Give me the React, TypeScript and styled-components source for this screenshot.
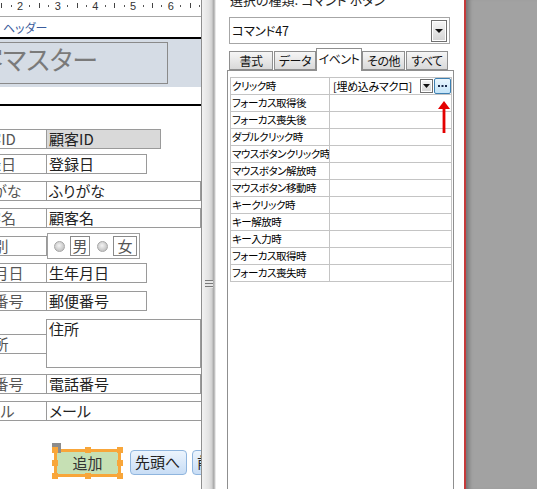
import React from "react";
import styled, { createGlobalStyle } from "styled-components";

const GlobalStyle = createGlobalStyle`
  html, body { margin: 0; padding: 0; }
  body { background: #a2a2a2; }
  #root { width: 537px; height: 489px; overflow: hidden; }
  * { box-sizing: border-box; }
`;

const Window = styled.div`
  display: flex;
  width: 537px;
  height: 489px;
  overflow: hidden;
  font-family: "Noto Sans CJK JP", "Noto Sans", "Liberation Sans", sans-serif;
  font-feature-settings: "palt";
`;

/* ---------- design surface ---------- */
const DesignPane = styled.div`
  width: 202px;
  flex-shrink: 0;
  background: #fff;
  border-right: 1px solid #8e8e8e;
  overflow: hidden;
  display: flex;
  flex-direction: column;
`;

const Ruler = styled.div`
  height: 17px;
  flex-shrink: 0;
  border-bottom: 1px solid #a8a8a8;
  background: #fff;
  svg { display: block; }
`;

const SectionBar = styled.div<{ $h: number }>`
  height: ${(p) => p.$h}px;
  flex-shrink: 0;
  border-bottom: 2px solid #000;
  background: #fff;
  padding-left: 3px;
  display: flex;
  align-items: center;
  font-size: 12px;
  color: #3a5c9c;
`;

const HeaderSection = styled.div`
  height: 48px;
  flex-shrink: 0;
  background: #d5dce5;
  padding-top: 3px;
`;

const TitleBox = styled.div`
  margin-left: -52px;
  width: 220px;
  height: 42px;
  border: 1px solid #8a8a8a;
  padding-left: 2px;
  font-size: 26px;
  line-height: 32px;
  color: #7a7a7a;
  white-space: nowrap;
`;

const Detail = styled.div`
  margin-left: -60px;
  display: flex;
  flex-direction: column;
`;

const Row = styled.div<{ $mt: number }>`
  display: flex;
  align-items: center;
  margin-top: ${(p) => p.$mt}px;
`;

const Label = styled.div`
  width: 107px;
  height: 20px;
  flex-shrink: 0;
  border: 1px solid #9a9a9a;
  text-align: center;
  font-size: 15px;
  line-height: 17px;
  color: #555;
  white-space: nowrap;
`;

const Field = styled.div<{ $w: number; $h?: number; $gray?: boolean }>`
  width: ${(p) => p.$w}px;
  height: ${(p) => p.$h ?? 20}px;
  flex-shrink: 0;
  margin-left: -1px;
  border: 1px solid #9a9a9a;
  background: ${(p) => (p.$gray ? "#d9d9d9" : "#fff")};
  padding-left: 2px;
  font-size: 15px;
  line-height: 17px;
  color: #222;
  white-space: nowrap;
`;

const OptionGroup = styled.div`
  width: 93px;
  height: 26px;
  flex-shrink: 0;
  border: 1px solid #a0a0a0;
  display: flex;
  align-items: center;
  padding-left: 5px;
`;

const Radio = styled.span<{ $ml: number }>`
  width: 11px;
  height: 11px;
  margin-left: ${(p) => p.$ml}px;
  border-radius: 50%;
  border: 1px solid #a6a6a6;
  background: radial-gradient(circle at 45% 40%, #f4f4f4 0, #cfcfcf 55%, #b4b4b4 100%);
  flex-shrink: 0;
`;

const OptBox = styled.span<{ $w: number }>`
  width: ${(p) => p.$w}px;
  height: 20px;
  margin-left: 5px;
  border: 1px solid #8a8a8a;
  font-size: 15px;
  line-height: 17px;
  color: #555;
  text-align: center;
  flex-shrink: 0;
`;

const ButtonRow = styled.div`
  display: flex;
  align-items: flex-start;
  margin-top: 28px;
  padding-left: 114px;
`;

const SelectedButton = styled.div`
  position: relative;
  width: 67px;
  height: 28px;
  flex-shrink: 0;
  border: 3px solid #f8a63a;
  background: #c6e0b4;
  font-size: 15px;
  line-height: 21px;
  color: #333;
  text-align: center;
`;

const Handle = styled.span<{ $x: string; $y: string }>`
  position: absolute;
  width: 6px;
  height: 6px;
  background: #f8a63a;
  left: ${(p) => p.$x};
  top: ${(p) => p.$y};
`;

const MoveHandle = styled.span`
  position: absolute;
  left: -5px;
  top: -9px;
  width: 9px;
  height: 10px;
  background: #8c8c8c;
`;

const NavButton = styled.div<{ $ml: number; $w: number }>`
  margin-left: ${(p) => p.$ml}px;
  margin-top: 1px;
  width: ${(p) => p.$w}px;
  height: 25px;
  flex-shrink: 0;
  border: 1px solid #8fb5de;
  border-radius: 4px;
  background: linear-gradient(#ecf4fd, #c8ddf5);
  font-size: 15px;
  line-height: 22px;
  color: #222;
  padding-left: 4px;
  white-space: nowrap;
`;

/* ---------- splitter ---------- */
const Splitter = styled.div`
  width: 14px;
  flex-shrink: 0;
  background: linear-gradient(
    to right,
    #f2f2f2 0,
    #e2e2e2 7px,
    #d0d0d0 10px,
    #b4b4b4 11px,
    #a6a6a6 12px,
    #dcdcdc 13px,
    #f4f4f4 14px
  );
  padding-top: 280px;
  padding-left: 3px;
`;

const Grip = styled.div`
  width: 8px;
  height: 8px;
  background: repeating-linear-gradient(#7a7a7a 0 1px, #e6e6e6 1px 3px);
`;

/* ---------- property sheet ---------- */
const PropertyPane = styled.div`
  width: 250px;
  flex-shrink: 0;
  background: #fff;
  border-right: 2px solid #c43a3a;
  padding-left: 11px;
  padding-right: 10px;
  display: flex;
  flex-direction: column;
  overflow: hidden;
`;

const SelectionType = styled.div`
  margin-top: -8px;
  height: 15px;
  padding-left: 3px;
  font-size: 13px;
  line-height: 15px;
  color: #222;
  white-space: nowrap;
`;

const Combo = styled.div`
  margin-top: 10px;
  margin-left: 2px;
  width: 221px;
  height: 27px;
  border: 1px solid #a6a6a6;
  display: flex;
  align-items: center;
  padding: 0 2px 0 2px;
`;

const ComboText = styled.span`
  flex: 1;
  font-size: 12.5px;
  letter-spacing: -0.2px;
  color: #111;
`;

const DropButton = styled.span<{ $w: number; $h: number }>`
  width: ${(p) => p.$w}px;
  height: ${(p) => p.$h}px;
  flex-shrink: 0;
  border: 1px solid #707070;
  box-shadow: inset 0 0 0 1px #fff;
  background: linear-gradient(#f6f6f6, #d4d4d4);
  display: flex;
  align-items: center;
  justify-content: center;
`;

const Tabs = styled.div`
  margin-top: 4px;
  height: 22px;
  flex-shrink: 0;
  display: flex;
  align-items: flex-end;
  padding-left: 2px;
`;

const Tab = styled.div<{ $w: number; $ml: number; $active?: boolean }>`
  position: relative;
  z-index: ${(p) => (p.$active ? 1 : 0)};
  width: ${(p) => p.$w}px;
  margin-left: ${(p) => p.$ml}px;
  height: ${(p) => (p.$active ? 23 : 19)}px;
  margin-bottom: ${(p) => (p.$active ? -1 : 0)}px;
  border: 1px solid #8f8f8f;
  border-bottom: ${(p) => (p.$active ? "none" : "1px solid #8f8f8f")};
  background: ${(p) => (p.$active ? "#fff" : "linear-gradient(#f6f6f6, #d9d9d9)")};
  font-size: 12px;
  letter-spacing: -0.5px;
  line-height: ${(p) => (p.$active ? 20 : 17)}px;
  text-align: center;
  color: #111;
  white-space: nowrap;
`;

const Frame = styled.div`
  position: relative;
  flex: 1;
  border: 1px solid #8f8f8f;
  border-bottom: none;
  padding: 6px 1px 0 2px;
`;

const Grid = styled.div`
  display: grid;
  grid-template-columns: 99px 122px;
  border-top: 1px solid #c4c4c4;
  border-left: 1px solid #c4c4c4;
`;

const Cell = styled.div`
  height: 17px;
  border-right: 1px solid #c4c4c4;
  border-bottom: 1px solid #c4c4c4;
  padding-left: 1px;
  font-size: 10.5px;
  letter-spacing: -0.5px;
  line-height: 16px;
  color: #000;
  white-space: nowrap;
  overflow: hidden;
`;

const ValueCell = styled(Cell)`
  display: flex;
  align-items: center;
  padding-left: 3px;
  font-size: 11px;
  letter-spacing: -0.3px;
`;

const MacroText = styled.span`
  flex: 1;
`;

const BuildButton = styled.span`
  width: 17px;
  height: 16px;
  margin-left: 1px;
  flex-shrink: 0;
  border: 1px solid #3c7fb1;
  border-radius: 2px;
  background: linear-gradient(#eaf6fd, #c4e4f8);
  display: flex;
  align-items: center;
  justify-content: center;
`;

const Arrow = styled.svg`
  position: absolute;
  left: 210px;
  top: 30px;
`;

const Backdrop = styled.div`
  flex: 1;
  background: #a2a2a2;
  box-shadow: inset 6px 0 4px -3px rgba(0, 0, 0, 0.28);
`;

/* ---------- data ---------- */
const rows: { label: string; field: string; w: number; mt: number; h?: number; gray?: boolean }[] = [
  { label: "顧客ID", field: "顧客ID", w: 115, mt: 23, gray: true },
  { label: "登録日", field: "登録日", w: 101, mt: 5 },
  { label: "ふりがな", field: "ふりがな", w: 155, mt: 7 },
  { label: "顧客名", field: "顧客名", w: 155, mt: 7 },
];
const rows2: { label: string; field: string; w: number; mt: number; h?: number }[] = [
  { label: "生年月日", field: "生年月日", w: 101, mt: 4 },
  { label: "郵便番号", field: "郵便番号", w: 101, mt: 8 },
  { label: "住所", field: "住所", w: 155, mt: 8, h: 49 },
  { label: "電話番号", field: "電話番号", w: 155, mt: 6 },
  { label: "メール", field: "メール", w: 175, mt: 7 },
];

const events = [
  "フォーカス取得後",
  "フォーカス喪失後",
  "ダブルクリック時",
  "マウスボタンクリック時",
  "マウスボタン解放時",
  "マウスボタン移動時",
  "キークリック時",
  "キー解放時",
  "キー入力時",
  "フォーカス取得時",
  "フォーカス喪失時",
];

const RulerDrawing = () => {
  const marks: React.ReactNode[] = [];
  const step = 37.7 / 4;
  for (let k = -2; k <= 20; k++) {
    const x = 20 + k * step;
    if (x < -2 || x > 200) continue;
    const m = ((k % 4) + 4) % 4;
    if (m === 0) {
      marks.push(
        <text key={k} x={x} y={10} fontSize="11" fontFamily="Liberation Sans, sans-serif" fill="#333" textAnchor="middle">
          {2 + k / 4}
        </text>
      );
    } else if (m === 2) {
      marks.push(<rect key={k} x={Math.round(x)} y={3} width={1} height={5} fill="#444" />);
    } else {
      marks.push(<rect key={k} x={Math.round(x)} y={5} width={1} height={2} fill="#555" />);
    }
  }
  return (
    <svg width="201" height="16" viewBox="0 0 201 16">
      {marks}
    </svg>
  );
};

const Triangle = ({ w = 7 }: { w?: number }) => (
  <svg width={w} height="4" viewBox={`0 0 ${w} 4`}>
    <polygon points={`0,0 ${w},0 ${w / 2},4`} fill="#111" />
  </svg>
);

export default function App() {
  return (
    <>
      <GlobalStyle />
      <Window>
        <DesignPane>
          <Ruler>
            <RulerDrawing />
          </Ruler>
          <SectionBar $h={22}>ヘッダー</SectionBar>
          <HeaderSection>
            <TitleBox>顧客マスター</TitleBox>
          </HeaderSection>
          <SectionBar $h={19} />
          <Detail>
            {rows.map((r) => (
              <Row key={r.label} $mt={r.mt}>
                <Label>{r.label}</Label>
                <Field $w={r.w} $h={r.h} $gray={r.gray}>
                  {r.field}
                </Field>
              </Row>
            ))}
            <Row $mt={5}>
              <Label>性別</Label>
              <OptionGroup>
                <Radio $ml={1} />
                <OptBox $w={20}>男</OptBox>
                <Radio $ml={7} />
                <OptBox $w={24}>女</OptBox>
              </OptionGroup>
            </Row>
            {rows2.map((r) => (
              <Row key={r.label} $mt={r.mt}>
                <Label>{r.label}</Label>
                <Field $w={r.w} $h={r.h}>
                  {r.field}
                </Field>
              </Row>
            ))}
            <ButtonRow>
              <SelectedButton>
                <MoveHandle />
                <Handle $x="-5px" $y="-5px" />
                <Handle $x="calc(50% - 3px)" $y="-5px" />
                <Handle $x="calc(100% - 1px)" $y="-5px" />
                <Handle $x="calc(100% - 1px)" $y="calc(50% - 3px)" />
                <Handle $x="calc(100% - 1px)" $y="calc(100% - 1px)" />
                <Handle $x="calc(50% - 3px)" $y="calc(100% - 1px)" />
                <Handle $x="-5px" $y="calc(100% - 1px)" />
                <Handle $x="-5px" $y="calc(50% - 3px)" />
                追加
              </SelectedButton>
              <NavButton $ml={9} $w={57}>先頭へ</NavButton>
              <NavButton $ml={5} $w={57}>前へ</NavButton>
            </ButtonRow>
          </Detail>
        </DesignPane>

        <Splitter>
          <Grip />
        </Splitter>

        <PropertyPane>
          <SelectionType>選択の種類: コマンド ボタン</SelectionType>
          <Combo>
            <ComboText>コマンド47</ComboText>
            <DropButton $w={16} $h={22}>
              <Triangle w={8} />
            </DropButton>
          </Combo>
          <Tabs>
            <Tab $w={44} $ml={0}>書式</Tab>
            <Tab $w={42} $ml={1}>データ</Tab>
            <Tab $w={46} $ml={0} $active>イベント</Tab>
            <Tab $w={43} $ml={0}>その他</Tab>
            <Tab $w={42} $ml={1}>すべて</Tab>
          </Tabs>
          <Frame>
            <Grid>
              <Cell>クリック時</Cell>
              <ValueCell>
                <MacroText>[埋め込みマクロ]</MacroText>
                <DropButton $w={13} $h={14}>
                  <Triangle w={7} />
                </DropButton>
                <BuildButton>
                  <svg width="9" height="2" viewBox="0 0 9 2">
                    <rect x="0" y="0" width="2" height="2" fill="#1a2a4a" />
                    <rect x="3.5" y="0" width="2" height="2" fill="#1a2a4a" />
                    <rect x="7" y="0" width="2" height="2" fill="#1a2a4a" />
                  </svg>
                </BuildButton>
              </ValueCell>
              {events.map((e, i) => (
                <React.Fragment key={i}>
                  <Cell>{e}</Cell>
                  <Cell />
                </React.Fragment>
              ))}
            </Grid>
            <Arrow width="12" height="32" viewBox="0 0 12 32">
              <polygon points="6,0 0,8 12,8" fill="#e40000" />
              <rect x="4.6" y="7" width="2.8" height="25" fill="#e40000" />
            </Arrow>
          </Frame>
        </PropertyPane>

        <Backdrop />
      </Window>
    </>
  );
}
